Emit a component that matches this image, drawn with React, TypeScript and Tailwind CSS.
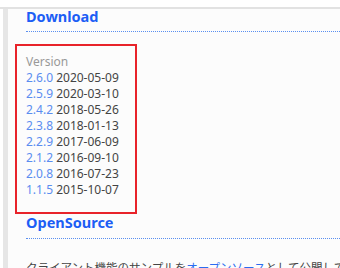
const versions = [
  { v: "2.6.0", date: "2020-05-09" },
  { v: "2.5.9", date: "2020-03-10" },
  { v: "2.4.2", date: "2018-05-26" },
  { v: "2.3.8", date: "2018-01-13" },
  { v: "2.2.9", date: "2017-06-09" },
  { v: "2.1.2", date: "2016-09-10" },
  { v: "2.0.8", date: "2016-07-23" },
  { v: "1.1.5", date: "2015-10-07" },
];

export default function App() {
  return (
    <div
      className="w-[340px] h-[268px] overflow-hidden flex flex-col bg-white"
      style={{ fontFamily: '"Noto Sans", "Noto Sans CJK JP", sans-serif' }}
    >
      {/* top bar edge */}
      <div className="h-[7px] bg-white shrink-0" />
      <div className="h-[2px] bg-[#e2e2e2] shrink-0" />

      <div className="flex flex-1 min-h-0">
        {/* left rail */}
        <div className="w-[3px] bg-white shrink-0" />
        <div className="w-[5px] bg-[#e6e6e6] shrink-0" />

        <div className="flex-1 overflow-hidden bg-[#fcfcfc] pl-[7px]">
          <h2 className="ml-[11px] pb-[8px] border-b border-dotted border-[#5a8ff0] text-[14.5px] leading-[14px] font-bold text-[#1d5ef5]">
            Download
          </h2>

          <div className="mt-[12px] w-[122px] h-[170px] border-2 border-[#e8232a] pt-[8px] pl-[9px] text-[12px] leading-[16px]">
            <div className="text-[#999999]">Version</div>
            {versions.map((r) => (
              <div key={r.v} className="whitespace-nowrap">
                <span className="text-[#5b8df0]">{r.v}</span>{" "}
                <span className="text-[#444444]">{r.date}</span>
              </div>
            ))}
          </div>

          <h2 className="ml-[11px] pt-[1px] pb-[9px] border-b border-dotted border-[#5a8ff0] text-[14.5px] leading-[14px] font-bold text-[#1d5ef5]">
            OpenSource
          </h2>

          <p className="ml-[11px] mt-[19px] text-[11.5px] leading-[20px] text-[#444444] whitespace-nowrap">
            クライアント機能のサンプルを<span className="text-[#2b6cf0]">オープンソース</span>として公開しており
          </p>
        </div>
      </div>
    </div>
  );
}
